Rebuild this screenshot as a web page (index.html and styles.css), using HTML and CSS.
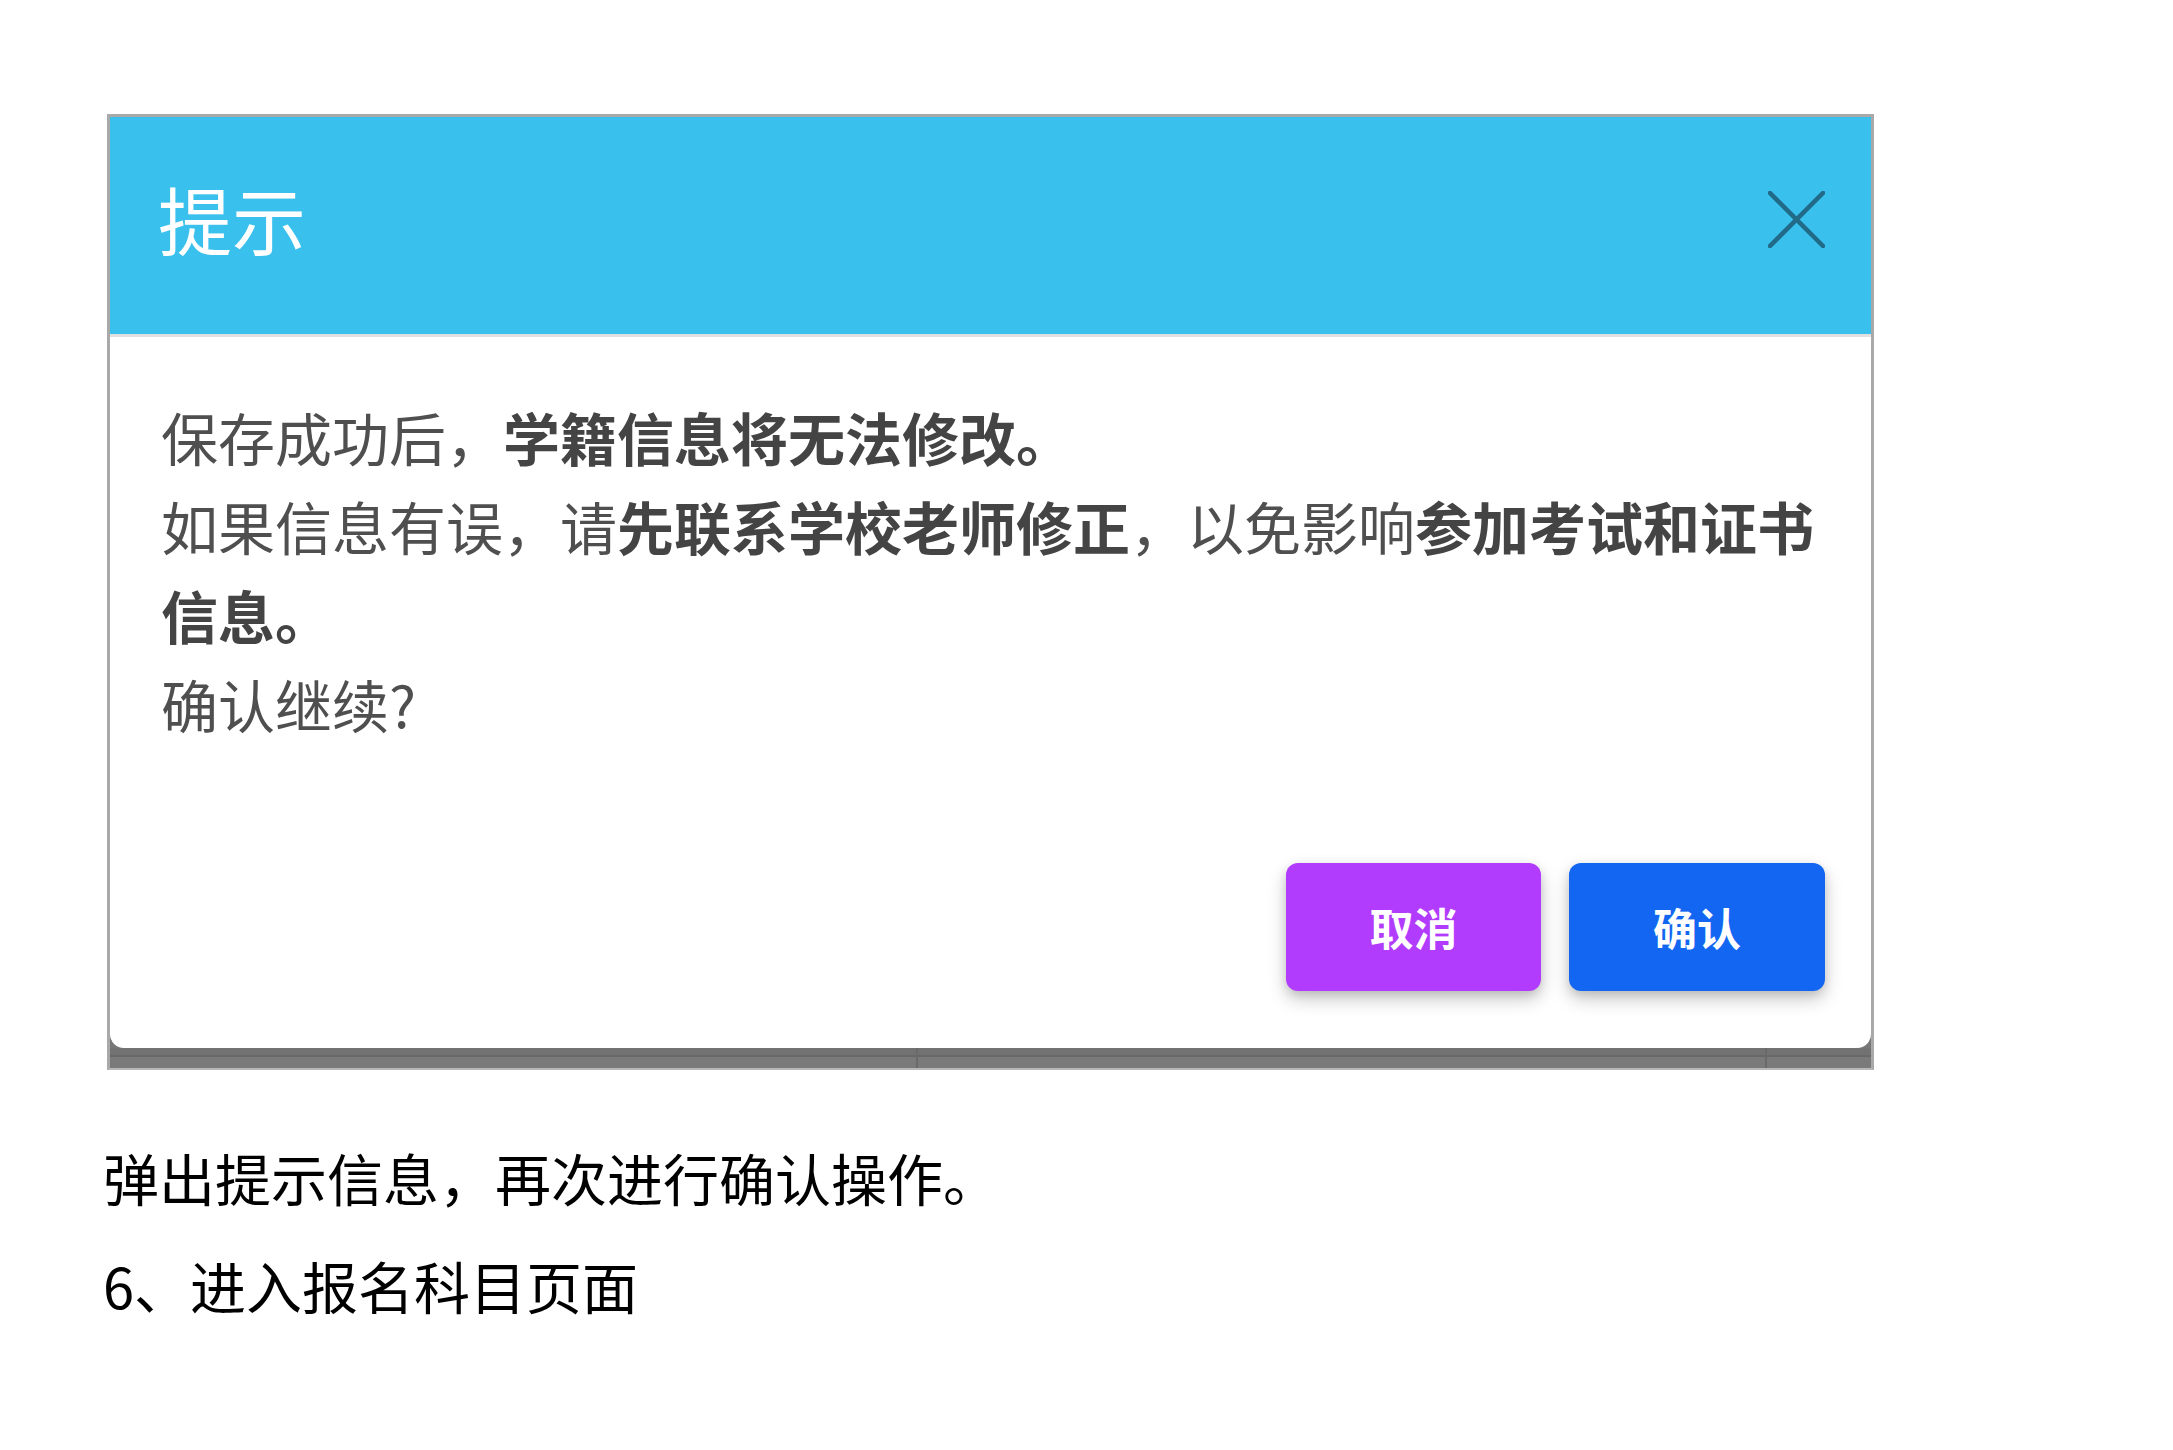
FILE: index.html
```html
<!DOCTYPE html>
<html lang="zh-CN">
<head>
<meta charset="utf-8">
<title>提示</title>
<link rel="stylesheet" href="styles.css">
</head>
<body>
<div class="page">
  <div class="frame">
    <div class="dialog">
      <div class="dialog-header">
        <h5 class="dialog-title">提示</h5>
        <button class="close-btn" type="button" aria-label="关闭">
          <svg width="57" height="57" viewBox="0 0 57 57"><path d="M2 2 L55 55 M55 2 L2 55" stroke="currentColor" stroke-width="4.5" stroke-linecap="square" fill="none"/></svg>
        </button>
      </div>
      <div class="dialog-body">
        <div class="message">
          <div class="msg-line"><span class="t">保存成功后，</span><span class="t strong">学籍信息将无法修改。</span></div>
          <div class="msg-line"><span class="t">如果信息有误，请</span><span class="t strong">先联系学校老师修正</span><span class="t">，以免影响</span><span class="t strong">参加考试和证书</span><span class="t strong">信息。</span></div>
          <div class="msg-line"><span class="t">确认继续?</span></div>
        </div>
        <div class="dialog-footer">
          <button class="btn btn-cancel" type="button">取消</button>
          <button class="btn btn-confirm" type="button">确认</button>
        </div>
      </div>
    </div>
    <div class="backdrop-row">
      <span class="cell cell-a"></span>
      <span class="cell cell-b"></span>
      <span class="cell cell-c"></span>
    </div>
  </div>
  <p class="caption">弹出提示信息，再次进行确认操作。</p>
  <p class="caption">6、进入报名科目页面</p>
</div>
</body>
</html>
```

FILE: styles.css
```css
html, body {
  margin: 0;
  padding: 0;
  background: #ffffff;
}

.page {
  padding: 114px 0 0 103px;
  font-family: "Noto Sans CJK SC", "Noto Sans", sans-serif;
}

.frame {
  margin-left: 4px;
  width: 1761px;
  border: 3px solid #a9a9a9;
  border-bottom: 2px solid #b8b8b8;
  background: #777777;
}

.dialog {
  background: #ffffff;
  border-radius: 0 0 14px 14px;
  overflow: hidden;
}

.dialog-header {
  height: 220px;
  box-sizing: border-box;
  background: #39c0ed;
  border-bottom: 3px solid #e0e0e0;
  display: flex;
  align-items: center;
  justify-content: space-between;
  padding: 0 46px 12px 48px;
}

.dialog-title {
  margin: 0 0 4px 0;
  font-size: 74px;
  font-weight: 400;
  line-height: 1;
  color: #ffffff;
}

.close-btn {
  border: 0;
  padding: 0;
  background: transparent;
  color: #216a88;
  width: 57px;
  height: 57px;
  display: block;
}

.close-btn svg {
  display: block;
}

.dialog-body {
  padding: 55px 46px 57px 51px;
}

.message {
  font-size: 57px;
  line-height: 89px;
  color: #4f4f4f;
}

.msg-line {
  margin: 0;
}

.t {
  font-weight: 400;
}

.t.strong {
  font-weight: 700;
  color: #444444;
}

.dialog-footer {
  margin-top: 115px;
  display: flex;
  justify-content: flex-end;
  gap: 28px;
}

.btn {
  width: 256px;
  height: 128px;
  border: 0;
  border-radius: 12px;
  color: #ffffff;
  font-family: "Noto Sans CJK SC", "Noto Sans", sans-serif;
  font-size: 44px;
  font-weight: 700;
  display: flex;
  align-items: center;
  justify-content: center;
  box-shadow: 0 8px 18px rgba(0, 0, 0, 0.22), 0 3px 8px rgba(0, 0, 0, 0.1);
}

.btn-cancel {
  width: 255px;
  background: #b23cfd;
}

.btn-confirm {
  background: #1266f1;
}

.backdrop-row {
  height: 20px;
  display: flex;
  background: linear-gradient(to bottom, #727272 0, #727272 7px, #686868 7px, #686868 9px, #7a7a7a 9px);
}

.cell {
  display: block;
  height: 100%;
}

.cell-a {
  width: 806px;
  border-right: 2px solid #6a6a6a;
}

.cell-b {
  width: 847px;
  border-right: 2px solid #6a6a6a;
}

.cell-c {
  flex: 1;
}

.caption {
  margin: 0;
  font-size: 56px;
  line-height: 108px;
  color: #000000;
}

.frame + .caption {
  margin-top: 53px;
}
```
